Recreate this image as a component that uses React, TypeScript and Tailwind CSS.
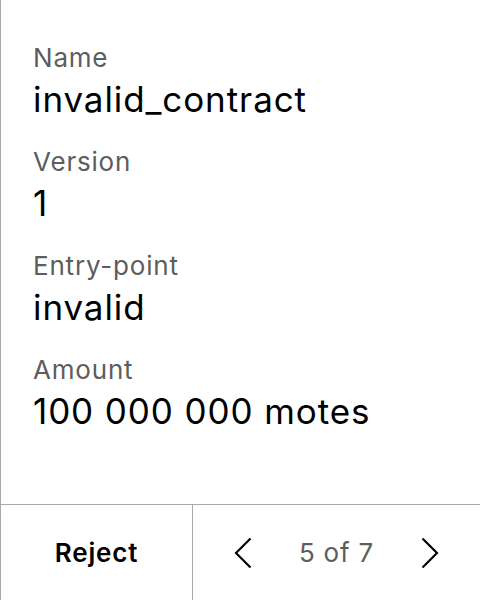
import React from "react";

const rows = [
  { label: "Name", value: "invalid_contract" },
  { label: "Version", value: "1" },
  { label: "Entry-point", value: "invalid" },
  { label: "Amount", value: "100 000 000 motes" },
];

export default function App() {
  return (
    <div
      className="w-[480px] h-[600px] bg-white flex flex-col border-l border-[#a8a8a8]"
      style={{ fontFamily: "Inter, 'Noto Sans', sans-serif" }}
    >
      <div className="flex-1 flex flex-col pl-8 pt-[40px] gap-[22px]">
        {rows.map((r) => (
          <div key={r.label} className="flex flex-col gap-[1px]">
            <div className="text-[26px] leading-[36px] tracking-[0.8px] text-[#5d5d5d]">{r.label}</div>
            <div className="text-[35px] leading-[45px] tracking-[0.9px] text-black">{r.value}</div>
          </div>
        ))}
      </div>
      <div className="h-[96px] border-t border-[#a8a8a8] flex">
        <div className="w-[192px] border-r border-[#a8a8a8] flex items-center justify-center text-[26px] tracking-[0.8px] font-semibold text-black">
          Reject
        </div>
        <div className="flex-1 flex items-center justify-between px-[41px]">
          <svg width="18" height="32" viewBox="0 0 18 32" fill="none">
            <path d="M16.5 1.5 L2 16 L16.5 30.5" stroke="black" strokeWidth="2.2" />
          </svg>
          <span className="text-[26px] tracking-[0.8px] text-[#5d5d5d]">5 of 7</span>
          <svg width="18" height="32" viewBox="0 0 18 32" fill="none">
            <path d="M1.5 1.5 L16 16 L1.5 30.5" stroke="black" strokeWidth="2.2" />
          </svg>
        </div>
      </div>
    </div>
  );
}
